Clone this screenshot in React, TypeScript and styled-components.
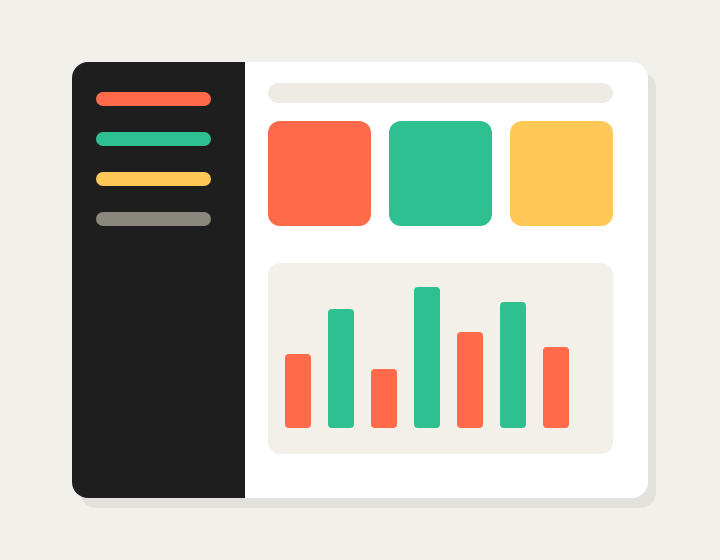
import styled, { createGlobalStyle } from "styled-components";

const GlobalStyle = createGlobalStyle`
    html, body {
        margin: 0;
        padding: 0;
        background-color: #f2f0eb;
        font-family: "Liberation Sans", Arial, sans-serif;
    }
`;

const colors = {
    red: "#ff6b4a",
    green: "#2ec090",
    yellow: "#ffc857",
    gray: "#8a877f",
};

const Page = styled.div`
    width: 720px;
    height: 560px;
    box-sizing: border-box;
    padding: 62px 0 0 72px;
`;

const Card = styled.div`
    display: flex;
    width: 576px;
    height: 436px;
    border-radius: 16px;
    background-color: #ffffff;
    box-shadow: 8px 10px 0 #e3e1dc;
    overflow: hidden;
`;

const Sidebar = styled.aside`
    width: 173px;
    flex-shrink: 0;
    background-color: #1e1e1e;
    box-sizing: border-box;
    padding: 30px 24px;
    display: flex;
    flex-direction: column;
    gap: 26px;
`;

const NavBar = styled.div<{ $color: string }>`
    width: 115px;
    height: 14px;
    border-radius: 7px;
    background-color: ${props => props.$color};
`;

const Main = styled.main`
    flex: 1;
    box-sizing: border-box;
    padding: 21px 35px 0 23px;
    display: flex;
    flex-direction: column;
`;

const SearchBar = styled.div`
    height: 20px;
    border-radius: 10px;
    background-color: #eeebe4;
`;

const Tiles = styled.div`
    display: grid;
    grid-template-columns: repeat(3, 1fr);
    gap: 17.5px;
    margin-top: 18px;
`;

const Tile = styled.div<{ $color: string }>`
    height: 105px;
    border-radius: 12px;
    background-color: ${props => props.$color};
`;

const ChartPanel = styled.div`
    margin-top: 37px;
    height: 191px;
    border-radius: 12px;
    background-color: #f3f0ea;
    box-sizing: border-box;
    padding: 0 17px 26px;
    display: flex;
    align-items: flex-end;
    gap: 17px;
`;

const Bar = styled.div<{ $color: string }>`
    width: 26px;
    border-radius: 4px;
    background-color: ${props => props.$color};
`;

const bars = [
    { height: 74, color: colors.red },
    { height: 119, color: colors.green },
    { height: 59, color: colors.red },
    { height: 141, color: colors.green },
    { height: 96, color: colors.red },
    { height: 126, color: colors.green },
    { height: 81, color: colors.red },
];

function App() {
    return (
        <>
            <GlobalStyle />
            <Page>
                <Card>
                    <Sidebar>
                        <NavBar $color={colors.red} />
                        <NavBar $color={colors.green} />
                        <NavBar $color={colors.yellow} />
                        <NavBar $color={colors.gray} />
                    </Sidebar>
                    <Main>
                        <SearchBar />
                        <Tiles>
                            <Tile $color={colors.red} />
                            <Tile $color={colors.green} />
                            <Tile $color={colors.yellow} />
                        </Tiles>
                        <ChartPanel>
                            {bars.map((bar, i) => (
                                <Bar key={i} $color={bar.color} style={{ height: bar.height }} />
                            ))}
                        </ChartPanel>
                    </Main>
                </Card>
            </Page>
        </>
    );
}

export default App;
